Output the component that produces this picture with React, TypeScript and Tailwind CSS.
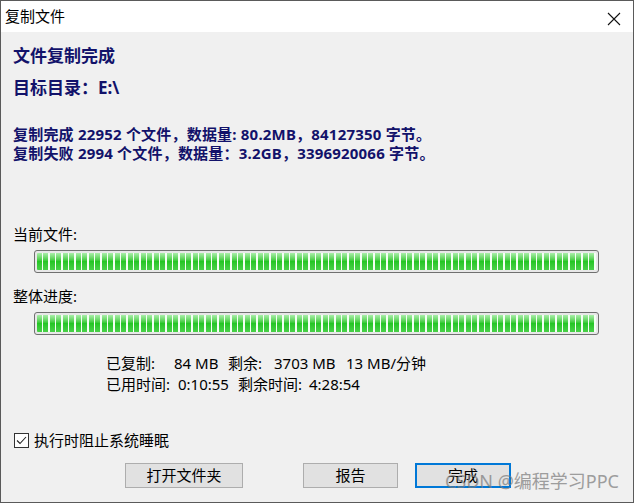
import React from "react";

function Bar() {
  return (
    <div className="ml-[21px] mt-[6px] h-[23px] w-[565px] rounded-[3px] border border-[#707070] bg-[#e8e8e8] p-[2px]">
      <div className="relative h-full w-full rounded-[1px] bg-linear-to-b from-[#a8eea8] via-[#24c624] to-[#48d048]">
        <div className="absolute inset-0 [background-image:repeating-linear-gradient(90deg,transparent_0px,transparent_5px,#f4fff4_5px,#f4fff4_6.5px)]" />
      </div>
    </div>
  );
}

export default function App() {
  return (
    <div
      className="flex h-[503px] w-[634px] flex-col overflow-hidden border border-[#5a5a5a] bg-[#f0f0f0] text-black"
      style={{ fontFamily: '"Noto Sans", "Noto Sans CJK SC", sans-serif' }}
    >
      <div className="flex h-[31px] shrink-0 items-center justify-between bg-white pl-[4px] pr-[12px]">
        <span className="text-[15px] leading-none">复制文件</span>
        <svg width="14" height="14" viewBox="0 0 14 14" className="mt-[4px]">
          <path d="M1 1 L13 13 M13 1 L1 13" stroke="#111" strokeWidth="1.1" fill="none" />
        </svg>
      </div>

      <div className="relative flex flex-1 flex-col px-[12px]">
        <div className="mt-[12px] text-[17px] font-bold leading-[24px] text-[#12126a]">文件复制完成</div>
        <div className="mt-[8px] text-[17px] font-bold leading-[24px] text-[#12126a]">目标目录：E:\</div>
        <div className="mt-[25px] text-[15px] font-bold leading-[19px] tracking-[0.2px] text-[#12126a]">
          <div>复制完成 22952 个文件，数据量: 80.2MB，84127350 字节。</div>
          <div>复制失败 2994 个文件，数据量：3.2GB，3396920066 字节。</div>
        </div>

        <div className="mt-[61px] text-[15px] leading-[20px]">当前文件:</div>
        <Bar />
        <div className="mt-[13px] text-[15px] leading-[20px]">整体进度:</div>
        <Bar />

        <div className="ml-[93px] mt-[18px] text-[15px] leading-[21px]">
          <div className="flex whitespace-pre">
            <span className="w-[68px] shrink-0">已复制:</span>
            <span className="w-[54px] shrink-0">84 MB</span>
            <span className="w-[46px] shrink-0">剩余:</span>
            <span className="w-[72px] shrink-0">3703 MB</span>
            <span>13 MB/分钟</span>
          </div>
          <div className="flex whitespace-pre">
            <span className="w-[72px] shrink-0">已用时间:</span>
            <span className="w-[60px] shrink-0">0:10:55</span>
            <span className="w-[71px] shrink-0">剩余时间:</span>
            <span>4:28:54</span>
          </div>
        </div>

        <div className="ml-[1px] mt-[35px] flex items-center gap-[5px] text-[15px] leading-[20px]">
          <div className="flex h-[15px] w-[15px] items-center justify-center border border-[#333] bg-white">
            <svg width="11" height="11" viewBox="0 0 11 11">
              <path d="M1 5.5 L4 8.5 L10 2" stroke="#222" strokeWidth="1.1" fill="none" />
            </svg>
          </div>
          <span>执行时阻止系统睡眠</span>
        </div>

        <div className="mt-[13px] flex text-[15px]">
          <button className="ml-[112px] h-[25px] w-[118px] border border-[#adadad] bg-[#e1e1e1] leading-none">打开文件夹</button>
          <button className="ml-[60px] h-[25px] w-[95px] border border-[#adadad] bg-[#e1e1e1] leading-none">报告</button>
          <button className="ml-[17px] h-[25px] w-[96px] border-2 border-[#0078d7] bg-[#e1e1e1] leading-none">完成</button>
        </div>

        <div className="pointer-events-none absolute bottom-[12px] right-[14px] text-[18px] leading-none text-[#7a7a7a] opacity-70">
          CSDN @编程学习PPC
        </div>
      </div>
    </div>
  );
}
